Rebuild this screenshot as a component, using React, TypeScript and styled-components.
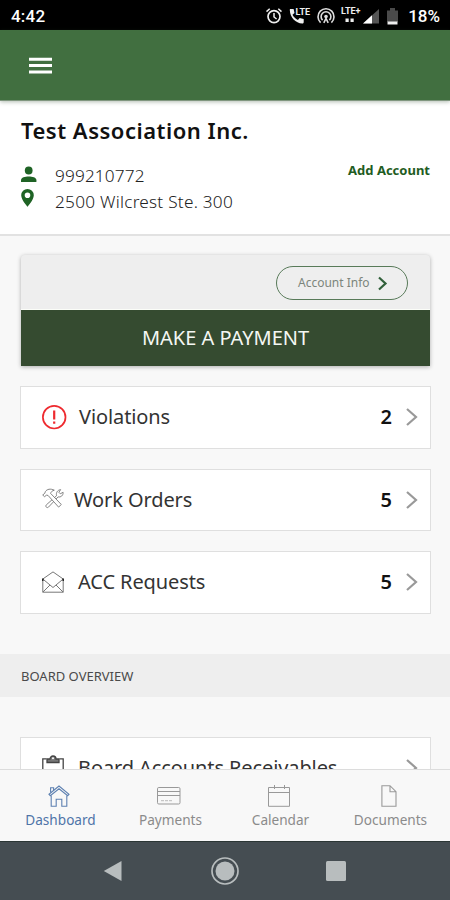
import React from 'react';
import styled, { createGlobalStyle } from 'styled-components';

const Global = createGlobalStyle`
  * { box-sizing: border-box; }
  body { margin: 0; background: #f8f8f8; font-family: 'Noto Sans', 'Open Sans', sans-serif; }
  svg { display: block; flex: none; overflow: visible; }
`;

const Screen = styled.div`
  width: 450px;
  height: 900px;
  display: flex;
  flex-direction: column;
  overflow: hidden;
  background: #f8f8f8;
`;

const StatusBar = styled.div`
  flex: none;
  height: 30px;
  padding: 0 10px 0 11px;
  display: flex;
  align-items: center;
  justify-content: space-between;
  background: #000;
  color: #fff;
  font: 500 17px/32px Roboto, sans-serif;
`;

const Clock = styled.span`
  padding-top: 2px;
  letter-spacing: 0.2px;
`;

const StatusIcons = styled.div`
  display: flex;
  align-items: center;
  gap: 6px;
  padding-top: 2px;
`;

const SignalGroup = styled.div`
  display: flex;
  align-items: center;
  gap: 2px;
  margin-right: 2px;
`;

const Percent = styled.span`
  margin-left: 4px;
`;

const AppBar = styled.div`
  flex: none;
  height: 71px;
  padding: 26px 28px;
  background: #416f40;
  box-shadow: 0 1px 4px rgba(40, 70, 40, 0.35);
  border-bottom: 1px solid #80967f;
  z-index: 1;
`;

const Header = styled.header`
  flex: none;
  height: 135px;
  padding: 0 20px 0 21px;
  background: #fff;
  border-bottom: 2px solid #e2e2e2;
`;

const Title = styled.h1`
  margin: 0;
  padding-top: 14px;
  font-size: 22px;
  line-height: 30px;
  font-weight: 600;
  letter-spacing: 0.5px;
  color: #111;
  white-space: nowrap;
`;

const HeaderBody = styled.div`
  display: flex;
  justify-content: space-between;
  padding-top: 17px;
`;

const Detail = styled.div<{ $spacing: number }>`
  display: flex;
  align-items: center;
  height: 26px;
  font-size: 17.2px;
  font-weight: 300;
  letter-spacing: ${(p) => p.$spacing}px;
  color: #222;
`;

const DetailIcon = styled.span<{ $lift: number }>`
  width: 34px;
  padding-bottom: ${(p) => p.$lift}px;
`;

const AddAccount = styled.a`
  font-size: 13px;
  font-weight: 700;
  line-height: 17px;
  color: #1f5c22;
`;

const Content = styled.main`
  flex: 1;
  min-height: 0;
  overflow: hidden;
  display: flex;
  flex-direction: column;
  padding-top: 19px;
`;

const PaymentCard = styled.section`
  flex: none;
  margin: 0 20px 0 21px;
  height: 111px;
  display: flex;
  flex-direction: column;
  background: #eee;
  border-radius: 4px 4px 0 0;
  box-shadow: 0 1px 4px rgba(0, 0, 0, 0.3);
`;

const InfoStrip = styled.div`
  height: 55px;
  padding: 11px 22px 0 0;
  display: flex;
  justify-content: flex-end;
  border-bottom: 1px solid #fbfdf8;
`;

const InfoButton = styled.button`
  width: 132px;
  height: 34px;
  padding: 0 20px 0 21px;
  display: flex;
  align-items: center;
  justify-content: space-between;
  border: 1px solid #587a59;
  border-radius: 17px;
  background: transparent;
  color: #7c857c;
  font: 400 12px/16px 'Noto Sans', sans-serif;
`;

const PayButton = styled.button`
  height: 56px;
  border: 0;
  padding: 0;
  background: #354b30;
  color: #f4f7f3;
  font: 400 20px/28px 'Noto Sans', sans-serif;
`;

const Rows = styled.div`
  flex: none;
  display: flex;
  flex-direction: column;
  gap: 20px;
  margin: 20px 19px 0 20px;
`;

const RowCard = styled.div`
  height: 62.5px;
  padding: 0 12px 0 21px;
  display: flex;
  align-items: center;
  background: #fff;
  border: 1.5px solid #dfdfdf;
`;

const RowLabel = styled.span<{ $gap: number }>`
  flex: 1;
  margin-left: ${(p) => p.$gap}px;
  font-size: 20px;
  line-height: 28px;
  letter-spacing: -0.1px;
  color: #333;
  white-space: nowrap;
`;

const Count = styled.span`
  margin-right: 14px;
  font-size: 20px;
  line-height: 28px;
  font-weight: 600;
  color: #111;
`;

const SectionTitle = styled.h2`
  flex: none;
  margin: 40px 0 20px;
  height: 43px;
  padding-left: 21px;
  background: #eee;
  font-size: 13px;
  line-height: 45px;
  font-weight: 400;
  color: #4a4a4a;
`;

const TabBar = styled.nav`
  flex: none;
  height: 72px;
  display: grid;
  grid-template-columns: repeat(4, 110px);
  padding-left: 5px;
  background: #f8f8f8;
  border-top: 1px solid #dcdcdc;
`;

const Tab = styled.a<{ $active?: boolean }>`
  display: flex;
  flex-direction: column;
  align-items: center;
  padding: 15px 0 0 1px;
  gap: 3px;
  font-size: 13.6px;
  line-height: 19px;
  color: ${(p) => (p.$active ? '#4f74a8' : '#8b8b8b')};
`;

const TabIcon = styled.span`
  margin-right: 3px;
`;

const SystemBar = styled.div`
  flex: none;
  height: 59px;
  display: flex;
  align-items: center;
  justify-content: space-between;
  padding: 0 104px 0 103px;
  background: #454d52;
  border-top: 1px solid #2b3635;
`;

const AlarmIcon = () => (
  <svg width="18" height="18" viewBox="0 0 18 18" fill="none" stroke="#eee" strokeWidth="1.7">
    <circle cx="9" cy="9.6" r="6" />
    <path d="M9 6v4l2.6 2M1.5 4.6l3.2-2.8M16.5 4.6l-3.2-2.8" strokeWidth="1.5" />
  </svg>
);

const CallLteIcon = () => (
  <svg width="22" height="18" viewBox="0 0 22 18">
    <path
      d="M1.2 2h3.4l.9 4-2 1.7c1.3 2.5 3 4 5.4 5.2l1.8-2 4 1v3.4c-.1.9-.6 1.2-1.4 1.2C6.6 16.3 1 10.300.8 3c0-.6.1-.9.4-1z"
      fill="#eee"
    />
    <text x="6.6" y="7.6" fill="#eee" fontSize="9" fontWeight="700" fontFamily="Roboto, sans-serif" textLength="14.500" lengthAdjust="spacingAndGlyphs">LTE</text>
  </svg>
);

const HotspotIcon = () => (
  <svg width="18" height="18" viewBox="0 0 18 18" fill="none" stroke="#ddd" strokeWidth="1.6">
    <path d="M3.6 15.600a8 8 0 1 1 10.800 0" />
    <path d="M5.600 13.200a4.900 4.900 0 1 1 6.800 0" />
    <circle cx="9" cy="9.600" r="1.800" fill="#ddd" stroke="none" />
    <path d="M6.800 15.800 9 11.500l2.200 4.300" />
  </svg>
);

const DataIcon = () => (
  <svg width="20" height="18" viewBox="0 0 20 18" fill="#eee">
    <text x="0" y="7.400" fontSize="9" fontWeight="700" fontFamily="Roboto, sans-serif" textLength="19.500" lengthAdjust="spacingAndGlyphs">LTE+</text>
    <rect x="4.500" y="11.500" width="3.200" height="3.500" />
    <rect x="9.500" y="11.500" width="3.200" height="3.500" />
  </svg>
);

const SignalIcon = () => (
  <svg width="16" height="16" viewBox="0 0 16 16">
    <path d="M0 15.500 16 1v14.500z" fill="#555" />
    <path d="M0 15.500 9 7.300v8.200z" fill="#fff" />
  </svg>
);

const BatteryIcon = () => (
  <svg width="11" height="17" viewBox="0 0 11 17">
    <path d="M0 2.500h3V0h5v2.500h3V14H0z" fill="#4a4a4a" />
    <path d="M.5 13.500h10v3H.5z" fill="#eee" />
  </svg>
);

const MenuIcon = () => (
  <svg width="24" height="18" viewBox="0 0 24 18" stroke="#fff" strokeWidth="3">
    <path d="M1 3.200h23M1 9.600h23M1 15.900h23" />
  </svg>
);

const PersonIcon = () => (
  <svg width="16" height="17" viewBox="0 0 16 17" fill="#1f6325">
    <circle cx="7.700" cy="4.500" r="3.900" />
    <path d="M0 16v-1.800c0-2.500 4-3.600 7.700-3.600s7.700 1.100 7.700 3.600V16z" />
  </svg>
);

const PinIcon = () => (
  <svg width="14" height="19" viewBox="0 0 14 19" fill="#1f6325">
    <path fillRule="evenodd" d="M6.500 0A6.300 6.300 0 0 0 .2 6.300C.2 11 6.500 17.800 6.500 17.800s6.300-6.800 6.300-11.500A6.300 6.300 0 0 0 6.500 0zm0 3.500a2.800 2.800 0 1 1 0 5.600 2.800 2.800 0 0 1 0-5.600z" />
  </svg>
);

const Chevron = ({ dark = false }: { dark?: boolean }) =>
  dark ? (
    <svg width="9" height="13" viewBox="0 0 9 13" fill="none" stroke="#31603a" strokeWidth="2.200">
      <path d="m1 .5 6.500 6L1 12.500" />
    </svg>
  ) : (
    <svg width="12" height="18" viewBox="0 0 12 18" fill="none" stroke="#999" strokeWidth="2.200">
      <path d="m1 1 9 8-9 8" />
    </svg>
  );

const AlertIcon = () => (
  <svg width="25" height="25" viewBox="0 0 25 25" fill="none" stroke="#ee2a2f">
    <circle cx="12.200" cy="12.200" r="11.300" strokeWidth="1.700" />
    <path d="M12.200 5.500v9M12.200 16.500v2.300" strokeWidth="2.200" />
  </svg>
);

const ToolsIcon = () => (
  <svg width="22" height="24" viewBox="0 -.5 22 24" fill="#fff" stroke="#777" strokeWidth="0.9">
    <path d="M14.600 7.200c-.8-2.800.800-5.700 4-6.100l-1.700 2.700 1.400 1.500 2.800-1.500c.3 3.100-2.300 5.200-5 4.600L6.500 18.600c-1.500 1.400-3.600-.6-2.200-2.200z" />
    <path d="M.7 6.500 2.600 8.200 4.400 6.700l1.600.2 10.600 11.700 2.700-2.600L8.600 4.900c.4-1.500 1.500-2.600 3.700-3.200C8.500-.1 5 .5 3.300 3.200L2.800 4.800z" />
  </svg>
);

const EnvelopeIcon = () => (
  <svg width="22" height="22" viewBox="0 0 22 22" fill="none" stroke="#777" strokeWidth="1">
    <path d="M.8 8v13.200h20.400V8L11 .9z" />
    <path d="M.8 8 8 14l3 2.500 3-2.500 7.200-6M.8 21.200 8 14M21.200 21.200 14 14" />
    <path d="M.8 7.500v2.500M21.200 7.500v2.500" stroke="#222" strokeWidth="1.500" />
  </svg>
);

const ClipboardIcon = () => (
  <svg width="22" height="26" viewBox="0 0 22 26" fill="none" stroke="#444" strokeWidth="1.300">
    <path d="M4.500 3.800H.8v21.400h20.400V3.800h-3.700" />
    <path d="M5 7.500V4h3a3 3 0 0 1 6 0h3v3.500z" fill="#777" />
    <circle cx="11" cy="3.300" r="1" fill="#fff" stroke="none" />
  </svg>
);

const HomeIcon = () => (
  <svg width="22" height="22" viewBox="0 0 22 22" fill="none" stroke="#5d80b1" strokeWidth="1.100">
    <path d="M1 9.200 11 1l10 8.200-1.300 1.500L11 3.700l-8.700 7z" />
    <path d="M2.600 7.500V2.700h3v2.500M3.200 10.500v10.800h5v-7h5.600v7h5V10.500" />
  </svg>
);

const CardIcon = () => (
  <svg width="24" height="22" viewBox="0 0 24 22" fill="none" stroke="#999" strokeWidth="1">
    <rect x=".5" y="2.500" width="22.500" height="16.500" rx="1.300" />
    <path d="M.6 6.500h22.400M.6 10.500h22.400" />
    <path d="M4 15.700h12" stroke="#bbb" strokeDasharray="3 1" />
  </svg>
);

const CalendarIcon = () => (
  <svg width="22" height="22" viewBox="0 0 22 22" fill="none" stroke="#999" strokeWidth="1">
    <path d="M.5 2.500h21v18.800H.5zM.5 7.500h21M6.500 0v4M16.500 0v4" />
  </svg>
);

const DocumentIcon = () => (
  <svg width="16" height="22" viewBox="0 0 16 22" fill="none" stroke="#999" strokeWidth="1.100">
    <path d="M.9.700h8.100l6 6v14.600H.9zM9 .700v6h6" />
  </svg>
);

const BackIcon = () => (
  <svg width="20" height="22" viewBox="0 0 20 22">
    <path d="M.8 11 18.500 1v20z" fill="#b8bdbe" />
  </svg>
);

const CircleIcon = () => (
  <svg width="30" height="30" viewBox="0 0 30 30">
    <circle cx="15" cy="15" r="13" fill="none" stroke="#b8bdbe" strokeWidth="1.700" />
    <circle cx="15" cy="15" r="9.500" fill="#b8bdbe" />
  </svg>
);

const SquareIcon = () => (
  <svg width="20" height="20" viewBox="0 0 20 20">
    <rect width="20" height="20" rx="1.500" fill="#b8bdbe" />
  </svg>
);

export default function App() {
  return (
    <Screen>
      <Global />
      <StatusBar>
        <Clock>4:42</Clock>
        <StatusIcons>
          <AlarmIcon />
          <CallLteIcon />
          <HotspotIcon />
          <SignalGroup>
            <DataIcon />
            <SignalIcon />
          </SignalGroup>
          <BatteryIcon />
          <Percent>18%</Percent>
        </StatusIcons>
      </StatusBar>
      <AppBar>
        <MenuIcon />
      </AppBar>
      <Header>
        <Title>Test Association Inc.</Title>
        <HeaderBody>
          <div>
            <Detail $spacing={0.15}>
              <DetailIcon $lift={2}><PersonIcon /></DetailIcon>
              999210772
            </Detail>
            <Detail $spacing={0.25}>
              <DetailIcon $lift={5}><PinIcon /></DetailIcon>
              2500 Wilcrest Ste. 300
            </Detail>
          </div>
          <AddAccount>Add Account</AddAccount>
        </HeaderBody>
      </Header>
      <Content>
        <PaymentCard>
          <InfoStrip>
            <InfoButton>
              Account Info
              <Chevron dark />
            </InfoButton>
          </InfoStrip>
          <PayButton>MAKE A PAYMENT</PayButton>
        </PaymentCard>
        <Rows>
          <RowCard>
            <AlertIcon />
            <RowLabel $gap={12}>Violations</RowLabel>
            <Count>2</Count>
            <Chevron />
          </RowCard>
          <RowCard>
            <ToolsIcon />
            <RowLabel $gap={10}>Work Orders</RowLabel>
            <Count>5</Count>
            <Chevron />
          </RowCard>
          <RowCard>
            <EnvelopeIcon />
            <RowLabel $gap={14}>ACC Requests</RowLabel>
            <Count>5</Count>
            <Chevron />
          </RowCard>
        </Rows>
        <SectionTitle>BOARD OVERVIEW</SectionTitle>
        <Rows>
          <RowCard>
            <ClipboardIcon />
            <RowLabel $gap={14}>Board Accounts Receivables</RowLabel>
            <Chevron />
          </RowCard>
        </Rows>
      </Content>
      <TabBar>
        <Tab $active><TabIcon><HomeIcon /></TabIcon>Dashboard</Tab>
        <Tab><TabIcon><CardIcon /></TabIcon>Payments</Tab>
        <Tab><TabIcon><CalendarIcon /></TabIcon>Calendar</Tab>
        <Tab><TabIcon><DocumentIcon /></TabIcon>Documents</Tab>
      </TabBar>
      <SystemBar>
        <BackIcon />
        <CircleIcon />
        <SquareIcon />
      </SystemBar>
    </Screen>
  );
}
